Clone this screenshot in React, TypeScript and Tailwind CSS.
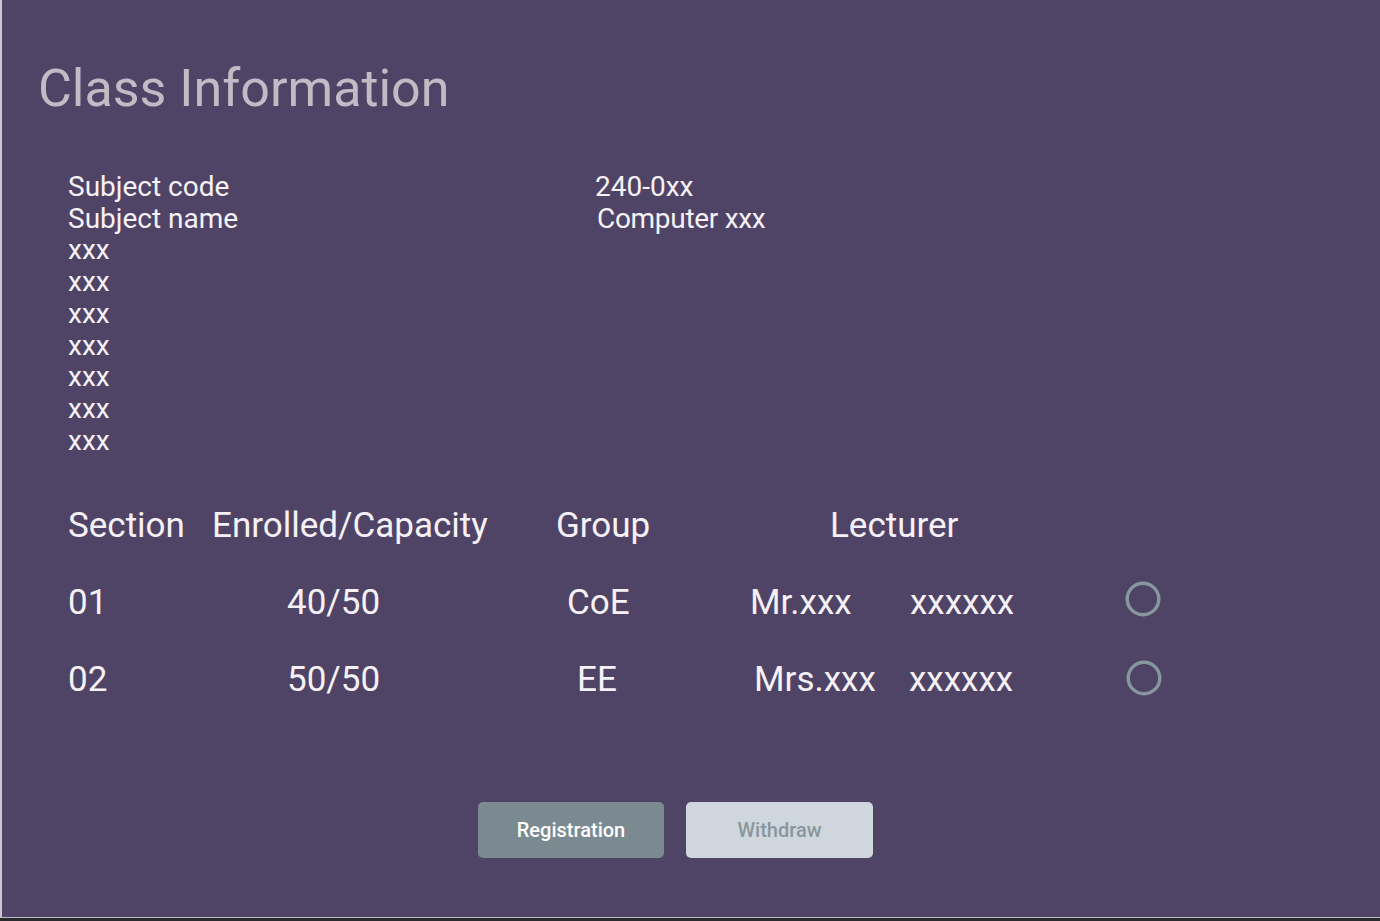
import React from "react";

const Radio = () => (
  <svg width="36" height="36" viewBox="0 0 36 36" className="block">
    <circle cx="18" cy="18" r="15.8" fill="none" stroke="#8797a0" strokeWidth="3.4" />
  </svg>
);

export default function App() {
  const info: [string, string][] = [
    ["Subject code", "240-0xx"],
    ["Subject name", "Computer xxx"],
    ["xxx", ""],
    ["xxx", ""],
    ["xxx", ""],
    ["xxx", ""],
    ["xxx", ""],
    ["xxx", ""],
    ["xxx", ""],
  ];
  return (
    <div
      className="w-[1380px] h-[921px] bg-[#2b2b2f] overflow-hidden"
      style={{ fontFamily: "Roboto, 'Noto Sans', sans-serif" }}
    >
      <div className="h-[918px] bg-[#4f4466] border-l-[2px] border-l-[#c9c6cc] border-b border-b-[#bdbac0] flex flex-col">
        <h1 className="pt-[58px] pl-[36px] text-[52px] leading-[62px] text-[#c2bbc6] font-normal">
          Class Information
        </h1>

        <div className="mt-[51px] pl-[66px] text-[28px] leading-[31.7px] text-[#f6f1f6]">
          {info.map(([a, b], i) => (
            <div key={i} className="flex">
              <span className="w-[527px]">{a}</span>
              <span className={i === 1 ? "pl-[2px] tracking-[-0.3px]" : ""}>{b}</span>
            </div>
          ))}
        </div>

        <div className="mt-[49px] pl-[66px] flex flex-col gap-[35px] text-[35px] leading-[42px] text-[#f6f1f6]">
          <div className="flex">
            <span className="w-[144px]">Section</span>
            <span className="w-[344px]">Enrolled/Capacity</span>
            <span className="w-[174px]">Group</span>
            <span className="pl-[100px]">Lecturer</span>
          </div>
          <div className="flex items-start">
            <span className="w-[144px]">01</span>
            <span className="w-[344px] pl-[75px]">40/50</span>
            <span className="w-[174px] pl-[11px]">CoE</span>
            <span className="w-[175px] pl-[20px]">Mr.xxx</span>
            <span className="w-[220px] pl-[5px]">xxxxxx</span>
            <span className="-mt-[1px]"><Radio /></span>
          </div>
          <div className="flex items-start">
            <span className="w-[144px]">02</span>
            <span className="w-[344px] pl-[75px]">50/50</span>
            <span className="w-[174px] pl-[21px]">EE</span>
            <span className="w-[175px] pl-[24px]">Mrs.xxx</span>
            <span className="w-[220px] pl-[4px]">xxxxxx</span>
            <span className="mt-[1px] ml-[1px]"><Radio /></span>
          </div>
        </div>

        <div className="mt-[101px] pl-[476px] flex gap-[22px]">
          <button className="w-[186px] h-[56px] rounded-[5px] bg-[#7a8a90] text-white text-[20px] font-medium">
            Registration
          </button>
          <button className="w-[187px] h-[56px] rounded-[5px] bg-[#cfd6dd] text-[#89979d] text-[20px] font-medium">
            Withdraw
          </button>
        </div>
      </div>
    </div>
  );
}
